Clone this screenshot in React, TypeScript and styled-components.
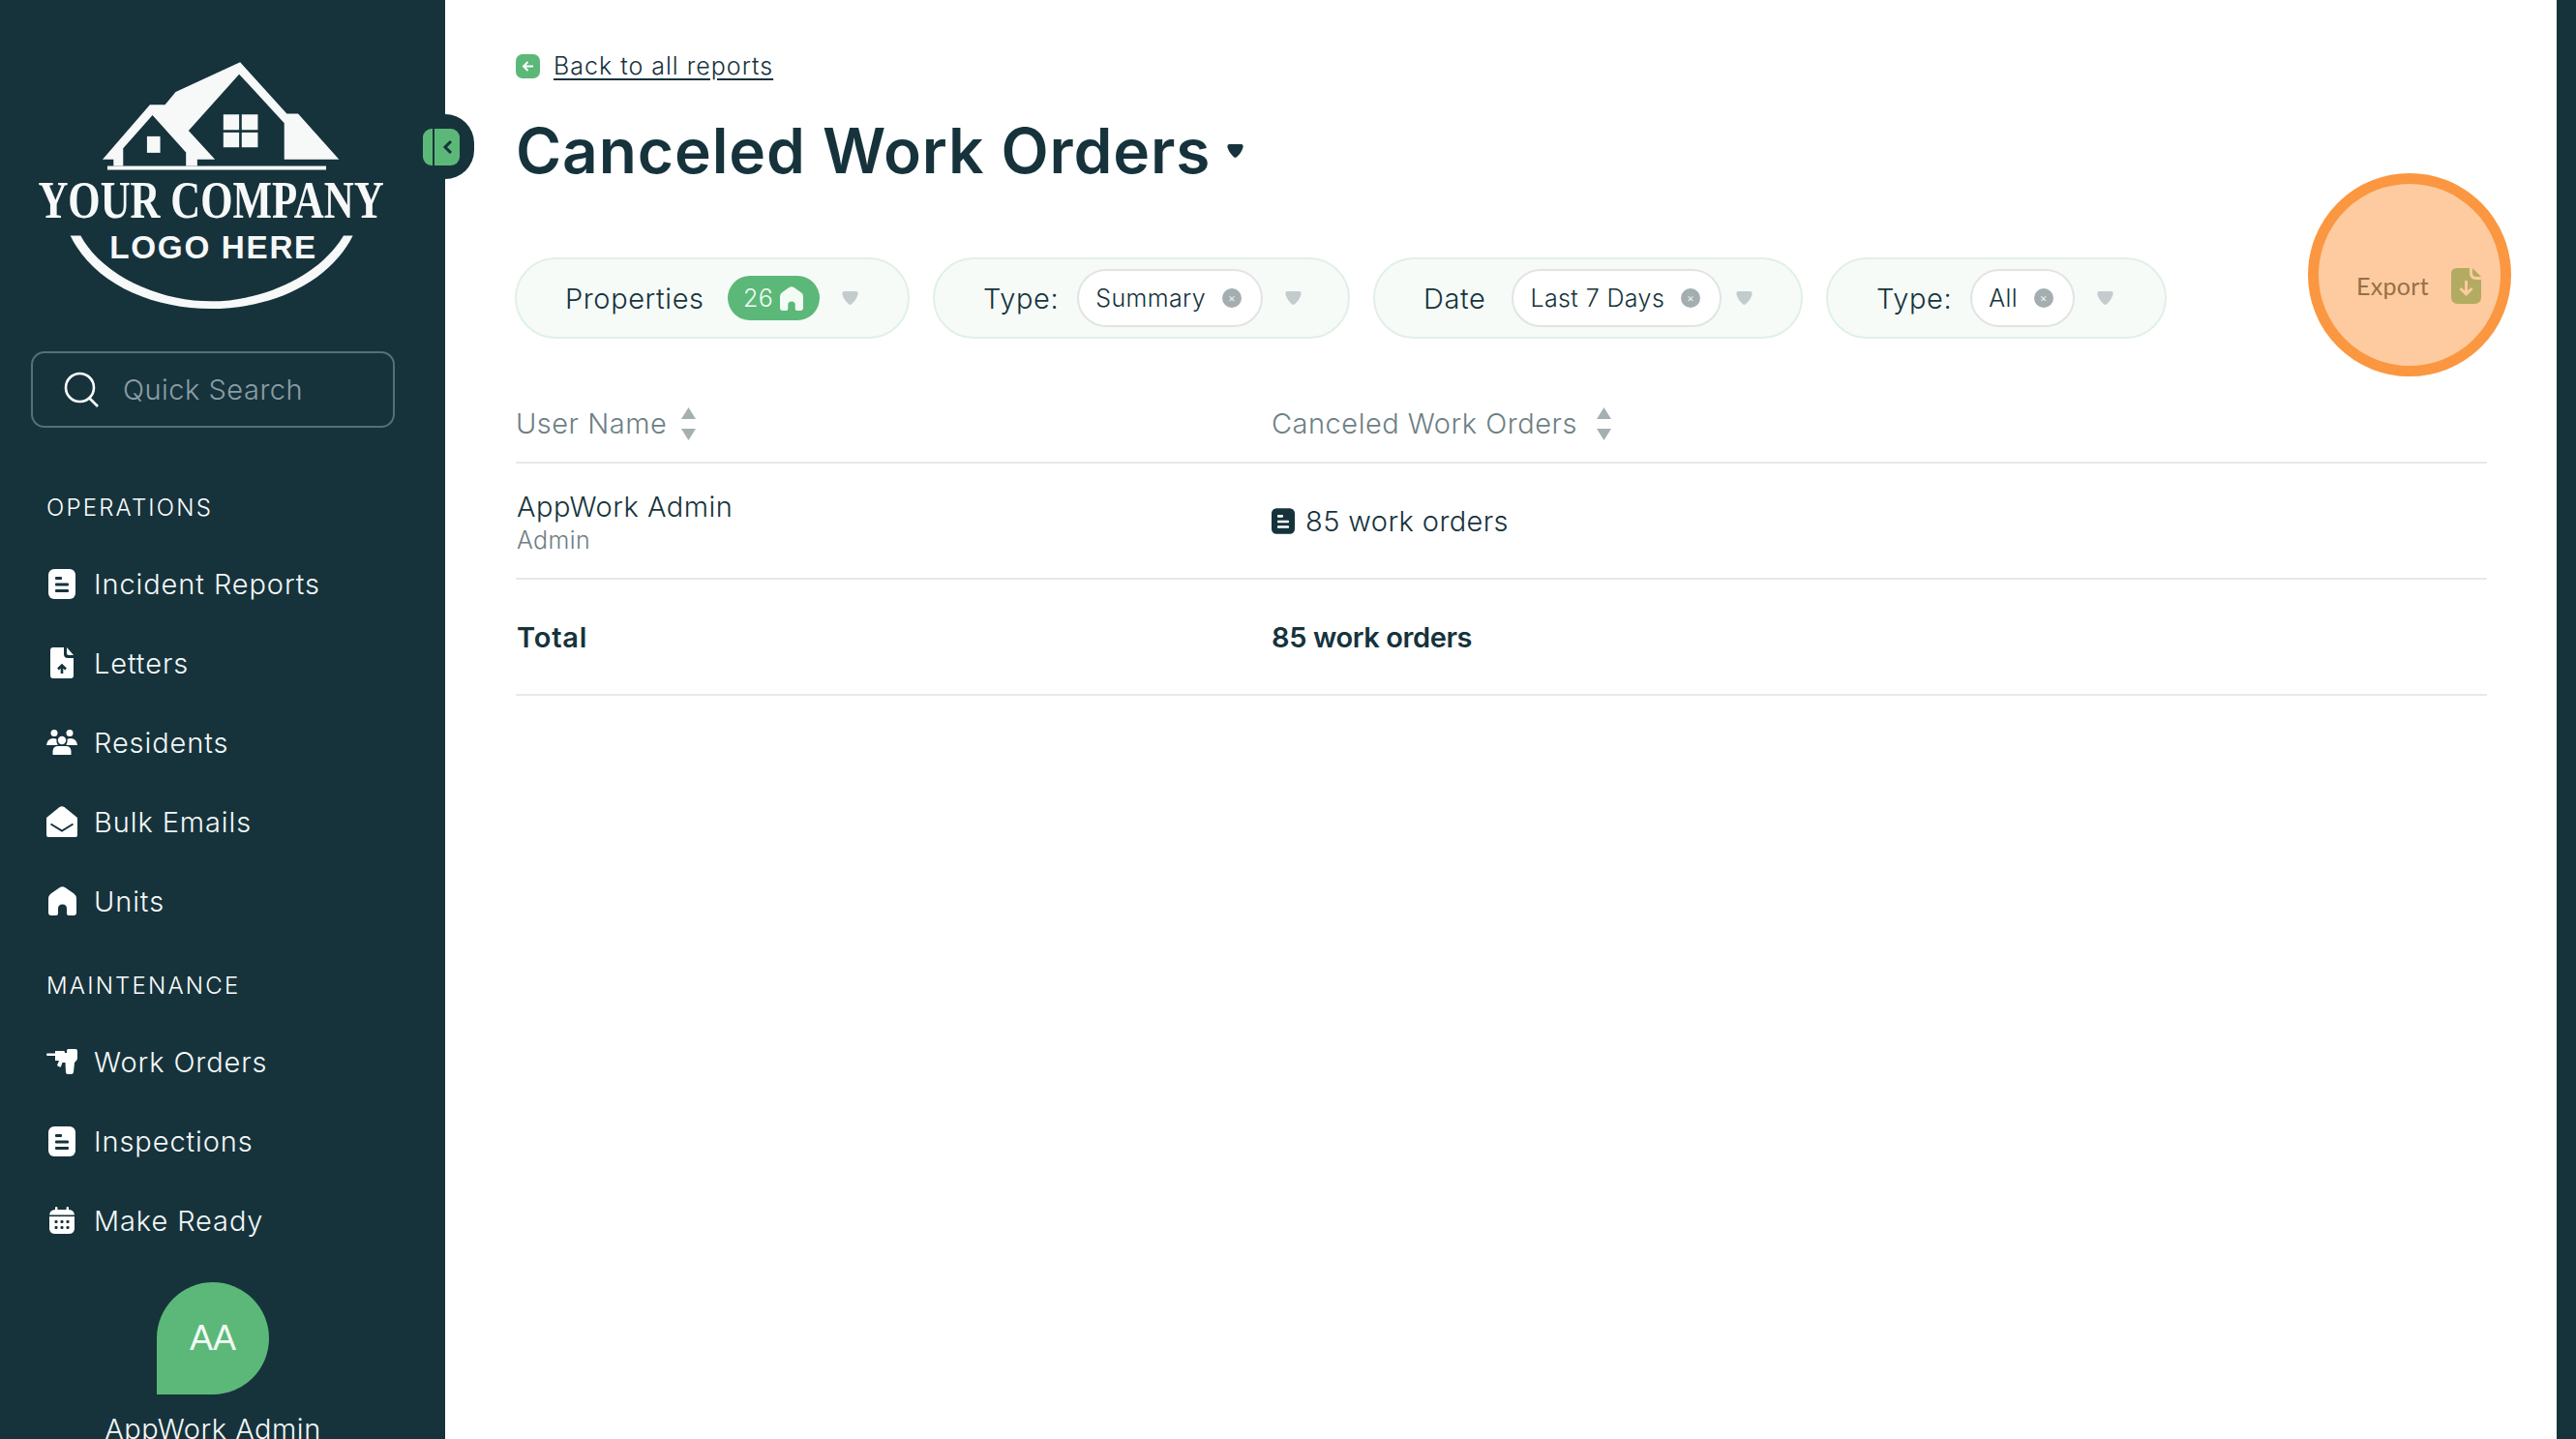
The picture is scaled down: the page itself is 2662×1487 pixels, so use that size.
import React from 'react'
import styled, { createGlobalStyle } from 'styled-components'

const GlobalStyle = createGlobalStyle`
  html, body {
    margin: 0;
    padding: 0;
    height: 100%;
    background: #fff;
    overflow: hidden;
  }
  * { box-sizing: border-box; }
  body { font-family: 'Inter', 'Liberation Sans', sans-serif; color: #16333c; }
`

const dark = '#16333c'
const green = '#5cb878'

const Page = styled.div`
  display: flex;
  width: 2662px;
  height: 1487px;
  overflow: hidden;
`
const Sidebar = styled.aside`
  position: relative;
  z-index: 2;
  flex: 0 0 460px;
  background: ${dark};
  color: #fff;
  padding: 60px 0 0;
`
const LogoWrap = styled.div`
  display: flex;
  padding-left: 33px;
  height: 263px;
  svg { display: block; }
`
const SearchBox = styled.div`
  display: flex;
  align-items: center;
  gap: 24px;
  width: 376px;
  height: 79px;
  margin: 40px 0 0 32px;
  padding-left: 32px;
  border: 2px solid #566f78;
  border-radius: 14px;
  color: #8b9ea5;
  font-size: 29px;
  font-weight: 300;
  letter-spacing: 0.5px;
`
const SectionLabel = styled.div<{ $top: number }>`
  margin: ${p => p.$top}px 0 0 48px;
  height: 32px;
  line-height: 32px;
  font-size: 24px;
  font-weight: 300;
  letter-spacing: 2.2px;
  color: #fff;
`
const NavList = styled.nav`
  display: flex;
  flex-direction: column;
  gap: 42px;
  margin: 42px 0 0 48px;
`
const NavItem = styled.div`
  display: flex;
  align-items: center;
  gap: 17px;
  height: 40px;
  font-size: 29px;
  font-weight: 300;
  letter-spacing: 0.9px;
  color: #f4f8f8;
`
const NavIcon = styled.span`
  display: flex;
  justify-content: center;
  align-items: center;
  width: 32px;
  height: 40px;
`
const Avatar = styled.div`
  display: flex;
  justify-content: center;
  align-items: center;
  width: 116px;
  height: 116px;
  margin: 44px 0 0 162px;
  background: ${green};
  border-radius: 50% 50% 50% 0;
  color: #f2fbf4;
  font-family: 'Liberation Sans', sans-serif;
  font-size: 36px;
`
const UserName = styled.div`
  margin-top: 18px;
  padding-right: 20px;
  text-align: center;
  font-size: 29px;
  font-weight: 300;
  letter-spacing: 0.5px;
  color: #f4f8f8;
`
const CollapseTab = styled.div`
  position: absolute;
  top: 118px;
  left: 460px;
  width: 30px;
  height: 67px;
  background: ${dark};
  border-radius: 0 34px 34px 0;
`
const CollapseIcon = styled.div`
  position: absolute;
  top: 133px;
  left: 437px;
  display: flex;
  align-items: center;
  justify-content: flex-end;
  width: 38px;
  height: 38px;
  padding-right: 6px;
  background: linear-gradient(90deg, ${green} 0 10px, ${dark} 10px 12px, ${green} 12px);
  border-radius: 9px;
`
const Main = styled.main`
  position: relative;
  flex: 1;
  padding: 52px 72px 0 73px;
  background: #fff;
`
const BackRow = styled.div`
  display: flex;
  align-items: center;
  gap: 14px;
  height: 32px;
`
const BackBadge = styled.span`
  display: flex;
  justify-content: center;
  align-items: center;
  width: 25px;
  height: 25px;
  background: ${green};
  border-radius: 7px;
`
const BackLink = styled.a`
  font-size: 25px;
  font-weight: 300;
  letter-spacing: 1px;
  color: ${dark};
  text-decoration: underline;
  text-underline-offset: 4px;
`
const TitleRow = styled.div`
  display: flex;
  align-items: center;
  margin-top: 32px;
  height: 80px;
`
const Title = styled.h1`
  margin: 0;
  font-size: 64px;
  font-weight: 600;
  letter-spacing: 0.9px;
  line-height: 80px;
  color: ${dark};
`
const FilterRow = styled.div`
  display: flex;
  align-items: flex-start;
  gap: 24px;
  margin: 70px 0 0 -1px;
  height: 84px;
`
const FilterPill = styled.div<{ $width: number }>`
  display: flex;
  align-items: center;
  width: ${p => p.$width}px;
  height: 84px;
  padding-left: 50px;
  background: #f6fbf8;
  border: 2px solid #e1f0e7;
  border-radius: 42px;
  font-size: 29px;
  font-weight: 300;
  letter-spacing: 0.6px;
  color: ${dark};
`
const FilterName = styled.span<{ $gap: number }>`
  margin-right: ${p => p.$gap}px;
  white-space: nowrap;
`
const CountBadge = styled.span`
  display: flex;
  align-items: center;
  justify-content: center;
  gap: 7px;
  width: 95px;
  height: 46px;
  background: ${green};
  border-radius: 23px;
  color: #f2fbf4;
  font-size: 25px;
`
const ValueChip = styled.span`
  display: flex;
  align-items: center;
  gap: 17px;
  height: 60px;
  padding: 0 20px 0 17px;
  background: #fff;
  border: 2px solid #e2e4e4;
  border-radius: 30px;
  font-size: 25px;
  font-weight: 300;
  letter-spacing: 0.4px;
  white-space: nowrap;
`
const ClearDot = styled.span`
  display: flex;
  justify-content: center;
  align-items: center;
  width: 20px;
  height: 20px;
  background: #a4aeb1;
  border-radius: 50%;
  color: #fff;
  font-size: 12px;
  line-height: 1;
`
const Caret = styled.svg<{ $gap: number }>`
  margin-left: ${p => p.$gap}px;
  flex: none;
`
const ExportButton = styled.div`
  display: flex;
  align-items: center;
  gap: 23px;
  margin: 10px 6px 0 auto;
  height: 38px;
  font-family: 'Lato', sans-serif;
  font-size: 25px;
  letter-spacing: 0.3px;
  color: ${dark};
  opacity: 0.9;
`
const Highlight = styled.div`
  position: absolute;
  top: 179px;
  left: 1925px;
  width: 210px;
  height: 210px;
  background: rgba(251, 151, 64, 0.5);
  border: 11px solid #fb9740;
  border-radius: 50%;
`
const Table = styled.div`
  display: flex;
  flex-direction: column;
  margin-top: 52px;
`
const HeadRow = styled.div`
  display: grid;
  grid-template-columns: 781px 1fr;
  align-items: center;
  height: 77px;
  padding-bottom: 4px;
  border-bottom: 2px solid #e6e9e9;
`
const BodyRow = styled.div`
  display: grid;
  grid-template-columns: 781px 1fr;
  align-items: center;
  height: 120px;
  padding-left: 1px;
  border-bottom: 2px solid #e6e9e9;
`
const HeadCell = styled.div<{ $gap: number }>`
  display: flex;
  align-items: center;
  gap: ${p => p.$gap}px;
  font-size: 29px;
  font-weight: 300;
  letter-spacing: 0.5px;
  color: #6e7f85;
`
const SortArrows = styled.svg`
  display: block;
`
const NameCell = styled.div`
  padding-top: 3px;
`
const CellMain = styled.div`
  font-size: 29px;
  font-weight: 300;
  letter-spacing: 0.5px;
  color: ${dark};
`
const CellSub = styled.div`
  margin-top: 2px;
  font-size: 25px;
  font-weight: 300;
  letter-spacing: 0.4px;
  color: #6e7f85;
`
const CountCell = styled.div`
  display: flex;
  align-items: center;
  gap: 11px;
  margin-left: -1px;
  font-size: 29px;
  font-weight: 300;
  letter-spacing: 0.4px;
  color: ${dark};
`
const TotalCell = styled.div`
  font-size: 29px;
  font-weight: 600;
  letter-spacing: 0.8px;
  color: ${dark};
`
const TotalCount = styled(TotalCell)`
  margin-left: -1px;
  letter-spacing: -0.4px;
`
const RightStrip = styled.div`
  flex: 0 0 20px;
  background: ${dark};
`

function Logo() {
  return (
    <svg width="367" height="263" viewBox="100 180 1100 790" fill="#f7f8f8">
      <path d="M318 495 L465 325 L512 325 L545 285 L745 193 L890 353 L925 353 L1052 495 L882 495 L882 382 L742 230 L585 405 L667 495 L612 495 L612 515 L577 515 L577 473 L473 357 L382 460 L382 515 L352 515 L352 495 Z" />
      <rect x="333" y="515" width="679" height="12" />
      <rect x="456" y="423" width="41" height="51" />
      <rect x="693" y="355" width="49" height="48" />
      <rect x="750" y="355" width="50" height="48" />
      <rect x="693" y="411" width="49" height="46" />
      <rect x="750" y="411" width="50" height="46" />
      <text transform="translate(118 677) scale(1.055 1.37)" fontFamily="'Liberation Serif', serif" fontWeight="700" fontSize="122">YOUR COMPANY</text>
      <text x="340" y="803" fontFamily="'Liberation Sans', sans-serif" fontWeight="700" fontSize="100" letterSpacing="5">LOGO HERE</text>
      <path d="M218 731 L250 731 C320 860 500 935 655 935 C810 935 990 860 1066 731 L1095 731 C1020 880 840 958 655 958 C470 958 290 880 218 731 Z" />
    </svg>
  )
}

function DocIcon({ color = '#fff', cut = dark, w = 28, h = 31 }: { color?: string; cut?: string; w?: number; h?: number }) {
  return (
    <svg width={w} height={h} viewBox="0 0 28 31">
      <rect width="28" height="31" rx="6" fill={color} />
      <rect x="7" y="8" width="7" height="3" rx="1" fill={cut} />
      <rect x="7" y="14.5" width="14" height="3" rx="1" fill={cut} />
      <rect x="7" y="21" width="14" height="3" rx="1" fill={cut} />
    </svg>
  )
}

function FileUpIcon() {
  return (
    <svg width="24" height="32" viewBox="0 0 24 32">
      <path d="M3 0 H14 V7 Q14 11 18 11 H24 V29 Q24 32 21 32 H3 Q0 32 0 29 V3 Q0 0 3 0 Z" fill="#fff" />
      <path d="M17 0 L24 8 H19 Q17 8 17 6 Z" fill="#fff" />
      <path d="M12 27 V19 M8 22.5 L12 18.5 L16 22.5" stroke={dark} strokeWidth="2.6" fill="none" />
    </svg>
  )
}

function PeopleIcon() {
  return (
    <svg width="32" height="26" viewBox="0 0 32 26" fill="#fff">
      <circle cx="8" cy="3.5" r="3.5" />
      <circle cx="24" cy="3.5" r="3.5" />
      <circle cx="16" cy="11" r="4.2" />
      <path d="M0 16 Q1 9 7 9 Q9.5 9 10.5 10 Q10 14 12 15.5 Q9.5 16 8.5 16 Z" />
      <path d="M32 16 Q31 9 25 9 Q22.5 9 21.5 10 Q22 14 20 15.5 Q22.5 16 23.5 16 Z" />
      <path d="M6.5 26 V22 Q7 17 12 17 H20 Q25 17 25.5 22 V26 Z" />
    </svg>
  )
}

function MailOpenIcon() {
  return (
    <svg width="32" height="32" viewBox="0 0 32 32">
      <path d="M0 12 L13.5 1 Q16 -0.5 18.5 1 L32 12 V30 Q32 32 30 32 H2 Q0 32 0 30 Z" fill="#fff" />
      <path d="M4.5 18.5 L16 25.5 L27.5 18.5" stroke={dark} strokeWidth="2" fill="none" />
    </svg>
  )
}

function HomeIcon({ w = 29, h = 30, color = '#fff' }: { w?: number; h?: number; color?: string }) {
  return (
    <svg width={w} height={h} viewBox="0 0 29 30">
      <path d="M11.5 1.2 Q14.5 -0.6 17.5 1.2 L26.5 7.5 Q29 9.5 29 12.5 V27 Q29 30 26 30 H21 Q19 30 19 28 V23 Q19 18.5 14.5 18.5 Q10 18.5 10 23 V28 Q10 30 8 30 H3 Q0 30 0 27 V12.5 Q0 9.5 2.5 7.5 Z" fill={color} />
    </svg>
  )
}

function DrillIcon() {
  return (
    <svg width="32" height="26" viewBox="0 0 32 26" fill="#fff">
      <path d="M0 5.5 Q0 4.5 1 4.5 H9 V7 H1 Q0 7 0 5.5 Z" />
      <path d="M9 2 H18 Q19 2 19 3.5 V4 H21 V1.5 Q21 0 22.5 0 H30 Q32 0 32 2 V9 Q32 11 30.5 12.5 L29 14 L28 24 Q27.5 26 25.5 26 H22 Q20 26 20 24 L19.5 14 H16.5 L15 18 Q14.5 19 13.5 18.5 L11 17 L13 12 H9 Z" />
    </svg>
  )
}

function CalendarIcon() {
  return (
    <svg width="26" height="28" viewBox="0 0 26 28">
      <rect x="6" y="0" width="2.4" height="5" rx="1" fill="#fff" />
      <rect x="17.6" y="0" width="2.4" height="5" rx="1" fill="#fff" />
      <path d="M0 10 Q0 3 6 3 H20 Q26 3 26 10 V22 Q26 28 20 28 H6 Q0 28 0 22 Z" fill="#fff" />
      <rect x="0" y="8.5" width="26" height="1.6" fill={dark} />
      {[7, 13, 19].map(x => (
        <React.Fragment key={x}>
          <rect x={x - 1.5} y="14" width="3" height="3" rx="1" fill={dark} />
          <rect x={x - 1.5} y="20" width="3" height="3" rx="1" fill={dark} />
        </React.Fragment>
      ))}
    </svg>
  )
}

function CaretIcon({ color = '#c3cbcd', gap = 23 }: { color?: string; gap?: number }) {
  return (
    <Caret $gap={gap} width="17" height="14" viewBox="0 0 17 14">
      <path d="M2.5 0 H14.5 Q17 0 16.6 3 Q15 9 9.8 13.4 Q8.5 14.2 7.2 13.4 Q2 9 0.4 3 Q0 0 2.5 0 Z" fill={color} />
    </Caret>
  )
}

function Sort() {
  return (
    <SortArrows width="15" height="34" viewBox="0 0 15 34" fill="#a6b0b3">
      <path d="M7.5 0 L15 12 H0 Z" />
      <path d="M0 22 H15 L7.5 34 Z" />
    </SortArrows>
  )
}

function Clear() {
  return <ClearDot>×</ClearDot>
}

const operations = [
  { label: 'Incident Reports', icon: <DocIcon /> },
  { label: 'Letters', icon: <FileUpIcon /> },
  { label: 'Residents', icon: <PeopleIcon /> },
  { label: 'Bulk Emails', icon: <MailOpenIcon /> },
  { label: 'Units', icon: <HomeIcon /> },
]
const maintenance = [
  { label: 'Work Orders', icon: <DrillIcon /> },
  { label: 'Inspections', icon: <DocIcon /> },
  { label: 'Make Ready', icon: <CalendarIcon /> },
]

export default function App() {
  return (
    <>
      <GlobalStyle />
      <Page>
        <Sidebar>
          <LogoWrap><Logo /></LogoWrap>
          <SearchBox>
            <svg width="37" height="37" viewBox="0 0 37 37" fill="none" stroke="#fff" strokeWidth="2.6">
              <circle cx="16.5" cy="16.5" r="14.5" />
              <path d="M26 27 L35 36" />
            </svg>
            Quick Search
          </SearchBox>
          <SectionLabel $top={67}>OPERATIONS</SectionLabel>
          <NavList>
            {operations.map(i => (
              <NavItem key={i.label}><NavIcon>{i.icon}</NavIcon>{i.label}</NavItem>
            ))}
          </NavList>
          <SectionLabel $top={52}>MAINTENANCE</SectionLabel>
          <NavList>
            {maintenance.map(i => (
              <NavItem key={i.label}><NavIcon>{i.icon}</NavIcon>{i.label}</NavItem>
            ))}
          </NavList>
          <Avatar>AA</Avatar>
          <UserName>AppWork Admin</UserName>
          <CollapseTab />
          <CollapseIcon>
            <svg width="12" height="16" viewBox="0 0 12 16" fill="none" stroke={dark} strokeWidth="3">
              <path d="M9 2 L3 8 L9 14" />
            </svg>
          </CollapseIcon>
        </Sidebar>
        <Main>
          <BackRow>
            <BackBadge>
              <svg width="13" height="13" viewBox="0 0 13 13" fill="none" stroke="#fff" strokeWidth="2">
                <path d="M12 6.5 H2 M6.5 2 L2 6.5 L6.5 11" />
              </svg>
            </BackBadge>
            <BackLink>Back to all reports</BackLink>
          </BackRow>
          <TitleRow>
            <Title>Canceled Work Orders</Title>
            <CaretIcon color={dark} gap={17} />
          </TitleRow>
          <FilterRow>
            <FilterPill $width={408}>
              <FilterName $gap={24}>Properties</FilterName>
              <CountBadge>26<HomeIcon w={24} h={25} color="#f2fbf4" /></CountBadge>
              <CaretIcon />
            </FilterPill>
            <FilterPill $width={431}>
              <FilterName $gap={19}>Type:</FilterName>
              <ValueChip>Summary<Clear /></ValueChip>
              <CaretIcon />
            </FilterPill>
            <FilterPill $width={444}>
              <FilterName $gap={27}>Date</FilterName>
              <ValueChip>Last 7 Days<Clear /></ValueChip>
              <CaretIcon gap={15} />
            </FilterPill>
            <FilterPill $width={352}>
              <FilterName $gap={19}>Type:</FilterName>
              <ValueChip>All<Clear /></ValueChip>
              <CaretIcon />
            </FilterPill>
            <ExportButton>
              Export
              <svg width="31" height="37" viewBox="0 0 31 37">
                <path d="M6 0 H19 V5 Q19 12 26 12 H31 V30 Q31 37 24 37 H7 Q0 37 0 30 V6 Q0 0 6 0 Z" fill={green} />
                <path d="M22 0 L31 9 H26 Q22 9 22 5 Z" fill={green} />
                <path d="M15.5 13 V26 M9.5 21 L15.5 27 L21.5 21" stroke="#fff" strokeWidth="3" fill="none" />
              </svg>
            </ExportButton>
          </FilterRow>
          <Table>
            <HeadRow>
              <HeadCell $gap={15}>User Name<Sort /></HeadCell>
              <HeadCell $gap={20}>Canceled Work Orders<Sort /></HeadCell>
            </HeadRow>
            <BodyRow>
              <NameCell>
                <CellMain>AppWork Admin</CellMain>
                <CellSub>Admin</CellSub>
              </NameCell>
              <CountCell><DocIcon color={dark} cut="#fff" w={24} h={27} />85 work orders</CountCell>
            </BodyRow>
            <BodyRow>
              <TotalCell>Total</TotalCell>
              <TotalCount>85 work orders</TotalCount>
            </BodyRow>
          </Table>
          <Highlight />
        </Main>
        <RightStrip />
      </Page>
    </>
  )
}
